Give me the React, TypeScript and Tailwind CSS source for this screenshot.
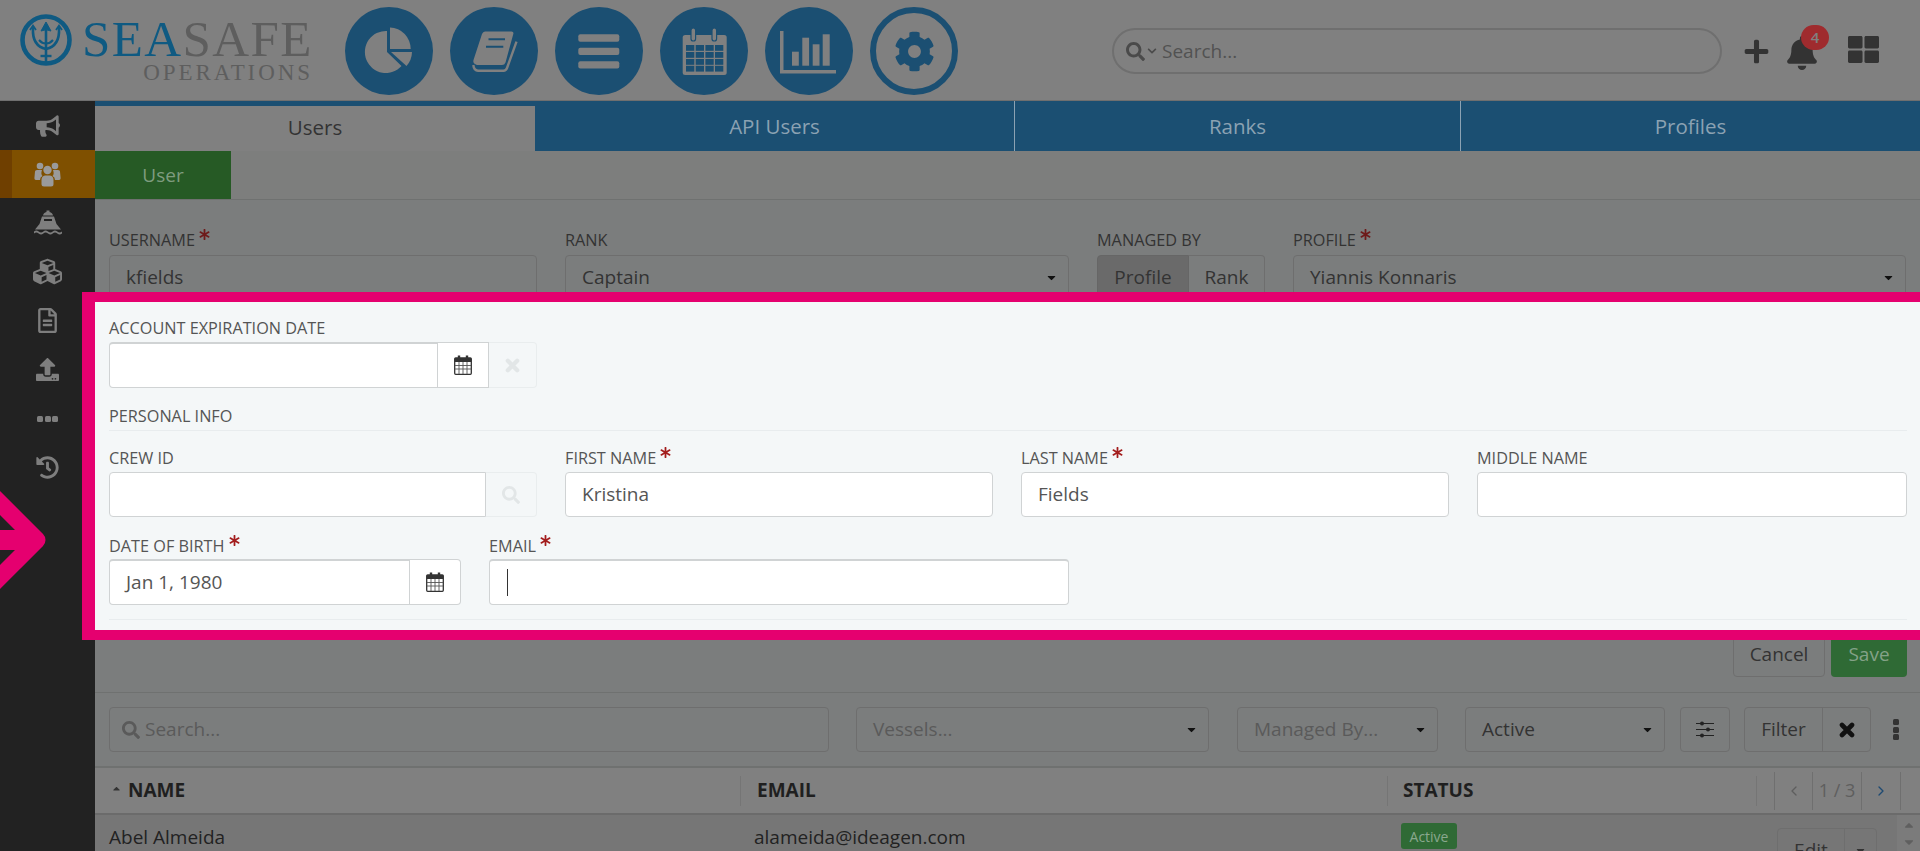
import type { ReactNode } from 'react'
import {
  FaAsterisk,
  FaBell,
  FaBullhorn,
  FaCaretDown,
  FaCaretUp,
  FaChevronDown,
  FaCog,
  FaCubes,
  FaHistory,
  FaPlus,
  FaRegFileAlt,
  FaSearch,
  FaThLarge,
  FaUpload
} from 'react-icons/fa'
import { LuChevronLeft, LuChevronRight } from 'react-icons/lu'

const DIM_BG = '#808080'
const BLUE = '#1b4f72'

function PieIcon() {
  return (
    <svg width="88" height="88" viewBox="0 0 88 88" fill={DIM_BG}>
      <path d="M42 45V24A21 21 0 1 0 56.5 59Z" />
      <path d="M45 42V20.5A21.5 21.5 0 0 1 65.7 42Z" />
      <path d="M46 45H67A22 22 0 0 1 61.5 59Z" />
    </svg>
  )
}

function BookIcon() {
  return (
    <svg width="88" height="88" viewBox="0 0 88 88" fill="none">
      <path d="M35 24.5H61.5Q64 24.5 63.3 27L55.5 55.5Q54.5 58 52 58H27Q22.5 57 23.5 53L32 27Q33 24.5 35 24.5Z" fill={DIM_BG} />
      <path d="M38.5 32.3H55M36 39.7H53.3" stroke={BLUE} strokeWidth="2" />
      <path d="M23.3 58Q24 63.7 28 63.7H53.5Q56 63.7 57 61L66.5 34.7" stroke={DIM_BG} strokeWidth="2.4" />
    </svg>
  )
}

function BarsIcon() {
  return (
    <svg width="88" height="88" viewBox="0 0 88 88" fill={DIM_BG}>
      <rect x="23.3" y="27.3" width="41" height="7.4" rx="2" />
      <rect x="23.3" y="40.7" width="41" height="7.4" rx="2" />
      <rect x="23.3" y="54.2" width="41" height="7.2" rx="2" />
    </svg>
  )
}

function CalendarIcon() {
  const rows = [38, 45, 52, 58.8]
  const cols = [26, 35.7, 45.4, 55]
  return (
    <svg width="88" height="88" viewBox="0 0 88 88" fill={DIM_BG}>
      <rect x="22.7" y="28" width="44" height="40" rx="2.5" />
      <rect x="31" y="21" width="4.6" height="13" rx="2.3" stroke={BLUE} strokeWidth="1.2" />
      <rect x="52" y="21" width="4.6" height="13" rx="2.3" stroke={BLUE} strokeWidth="1.2" />
      {rows.map((y) =>
        cols.map((x) => <rect key={`${x}-${y}`} x={x} y={y} width="8.3" height="5.8" fill={BLUE} />)
      )}
    </svg>
  )
}

function ChartIcon() {
  return (
    <svg width="88" height="88" viewBox="0 0 88 88" fill={DIM_BG}>
      <path d="M15 24H18.5V63H71V66.5H15Z" />
      <rect x="27" y="44.7" width="6.8" height="14" />
      <rect x="37.3" y="30.7" width="6.8" height="28" />
      <rect x="47.7" y="37.3" width="6.8" height="21.4" />
      <rect x="57.7" y="27.3" width="7" height="31.4" />
    </svg>
  )
}

// small FA4 style calendar, grid cells stay open
function CalIcon() {
  return (
    <svg width="18" height="20" viewBox="0 0 18 20" fill="none">
      <rect x="0.7" y="3" width="16.6" height="16.3" rx="1" stroke="#333" strokeWidth="1.3" />
      <rect x="0.7" y="3" width="16.6" height="4" fill="#333" />
      <path d="M5 0.5V5M13 0.5V5" stroke="#333" strokeWidth="2.4" />
      <path d="M1 10.5H17M1 14H17M5 7V19M9 7V19M13 7V19" stroke="#555" strokeWidth="0.9" />
    </svg>
  )
}

function XIcon({ size = 15 }: { size?: number }) {
  return (
    <svg width={size} height={size} viewBox="0 0 16 16" fill="none" stroke="currentColor" strokeWidth="4.6" strokeLinecap="round">
      <path d="M3 3L13 13M13 3L3 13" />
    </svg>
  )
}

function SlidersIcon() {
  return (
    <svg width="18" height="17" viewBox="0 0 18 17" fill="currentColor" stroke="currentColor">
      <path d="M0 2.5H18M0 8.5H18M0 14.5H18" strokeWidth="1.2" />
      <circle cx="6" cy="2.5" r="2" stroke="none" />
      <circle cx="12" cy="8.5" r="2" stroke="none" />
      <circle cx="6" cy="14.5" r="2" stroke="none" />
    </svg>
  )
}

function UsersIcon() {
  return (
    <svg width="27" height="25" viewBox="0 0 27 25" fill="currentColor">
      <circle cx="6" cy="4" r="3.3" />
      <circle cx="21" cy="4" r="3.3" />
      <circle cx="13.5" cy="8" r="4.2" />
      <path d="M1 9.5Q1 8 3 8H8Q6.5 12 8.5 14Q6 15 6 18H2Q0 18 0.5 15Z" />
      <path d="M26 9.5Q26 8 24 8H19Q20.5 12 18.5 14Q21 15 21 18H25Q27 18 26.5 15Z" />
      <path d="M7.5 18Q7.5 14 11 13.5H16Q19.5 14 19.5 18V22Q19.5 24.5 17 24.5H10Q7.5 24.5 7.5 22Z" />
    </svg>
  )
}

function ShipIcon() {
  return (
    <svg width="28" height="26" viewBox="0 0 28 26" fill="currentColor">
      <path d="M9 5.5Q9.5 2.5 12.5 2V0.5H15.5V2Q18.5 2.5 19 5.5Z" />
      <path d="M8 6.5H20L22.5 14L27 19.5H1L5.5 14ZM10 9V11H18V9Z" fillRule="evenodd" />
      <path d="M0 21.5Q2.3 19.5 4.7 21.5T9.3 21.5T14 21.5T18.7 21.5T23.3 21.5T28 21.5V23.500Q25.7 25.500 23.3 23.500T18.7 23.500T14 23.500T9.3 23.500T4.7 23.500T0 23.500Z" />
    </svg>
  )
}

function Dots({ vertical }: { vertical?: boolean }) {
  return (
    <div className={`flex gap-[1.5px] ${vertical ? 'flex-col' : ''}`}>
      <span className="size-[6px] rounded-[1.5px] bg-current" />
      <span className="size-[6px] rounded-[1.5px] bg-current" />
      <span className="size-[6px] rounded-[1.5px] bg-current" />
    </div>
  )
}

function Logo() {
  return (
    <div className="flex w-[345px] shrink-0 items-start pl-[20px] pt-[13px]">
      <svg width="52" height="54" viewBox="0 0 52 54" fill="none" stroke="#0f5a82" className="shrink-0">
        <circle cx="26" cy="27" r="23.5" strokeWidth="4.6" />
        <path d="M26 12V50" strokeWidth="2.6" />
        <path d="M21 18L26 9L31 18Q26 15.5 21 18Z" fill="#0f5a82" strokeWidth="1" />
        <path d="M13 15Q12 33 26 36Q40 33 39 15" strokeWidth="2.6" />
        <path d="M10 17L13 12.5L16 17M36 17L39 12.5L42 17" strokeWidth="1.8" />
        <path d="M19 27Q22 30.5 26 30.5Q30 30.5 33 27" strokeWidth="2" />
        <path d="M20.5 43H31.5" strokeWidth="2.4" />
      </svg>
      <div className="ml-[10px] flex flex-col items-end font-['Liberation_Serif',serif]">
        <div className="mt-[4px] whitespace-nowrap text-[51px] leading-[44px] tracking-[1.4px]">
          <span className="text-[#0f5a82]">SEA</span>
          <span className="text-[#5e5e5e]">SAFE</span>
        </div>
        <div className="mt-[1px] whitespace-nowrap text-[23px] leading-[22px] tracking-[2.9px] text-[#5e5e5e]">
          OPERATIONS
        </div>
      </div>
    </div>
  )
}

function Header() {
  const circles = [<PieIcon />, <BookIcon />, <BarsIcon />, <CalendarIcon />, <ChartIcon />]
  return (
    <header className="flex h-[101px] shrink-0 items-start border-b border-[#6f6f6f] bg-[#808080]">
      <Logo />
      <nav className="flex gap-[17px] pt-[7px]">
        {circles.map((icon, i) => (
          <div key={i} className="size-[88px] rounded-full bg-[#1b4f72]">
            {icon}
          </div>
        ))}
        <div className="flex size-[88px] items-center justify-center rounded-full border-[6px] border-[#1b4f72]">
          <FaCog size={41} color="#1b4f72" />
        </div>
      </nav>
      <div className="ml-[154px] mt-[28px] flex h-[46px] w-[610px] items-center rounded-full border-2 border-[#6f6f6f] pl-[12px] text-[#525252]">
        <FaSearch size={19} className="text-[#4a4a4a]" />
        <FaChevronDown size={10} className="ml-[2px] text-[#4a4a4a]" />
        <span className="ml-[5px] text-[19px]">Search...</span>
      </div>
      <div className="relative ml-[21px] mt-[38px] flex items-start">
        <FaPlus size={27} className="text-[#333]" />
        <FaBell size={34} className="ml-[15px] -mt-[2px] text-[#333]" />
        <span className="absolute left-[58px] -top-[13px] flex h-[25px] w-[28px] items-center justify-center rounded-full bg-[#9f2b2e] text-[15px] font-semibold text-[#808080]">
          4
        </span>
        <FaThLarge size={31} className="ml-[29px] -mt-[4px] text-[#333]" />
      </div>
    </header>
  )
}

function Sidebar() {
  const items = [
    { key: 'news', icon: <FaBullhorn size={24} /> },
    { key: 'users', icon: <UsersIcon />, active: true },
    { key: 'ship', icon: <ShipIcon /> },
    { key: 'cubes', icon: <FaCubes size={29} /> },
    { key: 'docs', icon: <FaRegFileAlt size={25} /> },
    { key: 'upload', icon: <FaUpload size={23} /> },
    { key: 'more', icon: <Dots /> },
    { key: 'history', icon: <FaHistory size={23} /> }
  ]
  return (
    <aside className="flex w-[95px] shrink-0 flex-col bg-[#222222] text-[#7e7e7e]">
      {items.map((item) =>
        item.active ? (
          <div key={item.key} className="flex h-[48px] items-center justify-center border-l-[12px] border-[#6f3f00] bg-[#7f5000] pr-[12px] text-[#9a9a9a]">
            {item.icon}
          </div>
        ) : (
          <div key={item.key} className="flex h-[49px] items-center justify-center">
            {item.icon}
          </div>
        )
      )}
    </aside>
  )
}

function Label({ text, required, bright }: { text: string; required?: boolean; bright?: boolean }) {
  return (
    <div className={`flex h-[20px] items-center whitespace-nowrap text-[16.25px] uppercase ${bright ? 'text-[#555]' : 'text-[#333]'}`}>
      {text}
      {required && (
        <FaAsterisk size={11} color={bright ? '#a31d1d' : '#6e1a1a'} className="ml-[4px] mb-[12px] inline-block" />
      )}
    </div>
  )
}

function Input({ value, className = '' }: { value?: string; className?: string }) {
  return (
    <div className={`flex h-[45px] items-center rounded-[4px] border border-[#d0d3d4] bg-white pl-[16px] text-[19px] text-[#555] ${className}`}>
      {value}
    </div>
  )
}

function DimInput({ value }: { value: string }) {
  return (
    <div className="mt-[5px] flex h-[45px] items-center rounded-[4px] border border-[#6e6e6e] pl-[16px] text-[19px] text-[#333]">
      {value}
    </div>
  )
}

function DimSelect({ value, muted, className = '' }: { value: string; muted?: boolean; className?: string }) {
  return (
    <div className={`flex h-[45px] items-center justify-between whitespace-nowrap rounded-[4px] border border-[#6e6e6e] pl-[16px] pr-[10px] text-[19px] ${muted ? 'text-[#5a5a5a]' : 'text-[#333]'} ${className}`}>
      {value}
      <FaCaretDown size={13} className="text-[#111]" />
    </div>
  )
}

function DateField({ value, clear, className = '' }: { value?: string; clear?: boolean; className?: string }) {
  return (
    <div className={`flex h-[46px] ${className}`}>
      <Input value={value} className="h-full flex-1 rounded-r-none border-t-2" />
      <div className={`flex h-full w-[51px] items-center justify-center border border-l-0 border-[#d0d3d4] bg-white ${clear ? '' : 'rounded-r-[4px]'}`}>
        <CalIcon />
      </div>
      {clear && (
        <div className="flex h-full w-[48px] items-center justify-center rounded-r-[4px] border border-l-0 border-[#e9edee] text-[#e2e6e7]">
          <XIcon />
        </div>
      )}
    </div>
  )
}

function TopForm() {
  return (
    <div className="flex h-[92px] gap-[28px] overflow-hidden px-[14px] pt-[30px]">
      <div className="w-[428px]">
        <Label text="Username" required />
        <DimInput value="kfields" />
      </div>
      <div className="w-[504px]">
        <Label text="Rank" />
        <DimSelect value="Captain" className="mt-[5px]" />
      </div>
      <div className="w-[168px]">
        <Label text="Managed by" />
        <div className="mt-[5px] flex h-[45px] text-[19px] text-[#333]">
          <div className="flex w-[92px] items-center justify-center rounded-l-[4px] border border-[#666] bg-[#6a6a6a]">Profile</div>
          <div className="flex flex-1 items-center justify-center rounded-r-[4px] border border-l-0 border-[#6e6e6e]">Rank</div>
        </div>
      </div>
      <div className="w-[613px]">
        <Label text="Profile" required />
        <DimSelect value="Yiannis Konnaris" className="mt-[5px]" />
      </div>
    </div>
  )
}

function HighlightPanel() {
  return (
    <section className="z-10 -ml-[13px] h-[348px] shrink-0 border-y-[10px] border-l-[13px] border-[#e5006f] bg-[#f4f7f8] pl-[14px] pr-[13px]">
      <div className="pt-[16px]">
        <Label text="Account expiration date" bright />
        <DateField clear className="mt-[4px] w-[428px]" />
      </div>
      <div className="mt-[18px] border-b border-[#e8ecee] pb-[4px]">
        <Label text="Personal info" bright />
      </div>
      <div className="mt-[17px] grid grid-cols-[428px_428px_428px_1fr] gap-x-[28px]">
        <div>
          <Label text="Crew ID" bright />
          <div className="mt-[4px] flex h-[45px]">
            <Input className="h-full flex-1 rounded-r-none" />
            <div className="flex w-[51px] items-center justify-center rounded-r-[4px] border border-l-0 border-[#e9edee] text-[#e2e6e7]">
              <FaSearch size={18} />
            </div>
          </div>
        </div>
        <div>
          <Label text="First name" required bright />
          <Input value="Kristina" className="mt-[4px]" />
        </div>
        <div>
          <Label text="Last name" required bright />
          <Input value="Fields" className="mt-[4px]" />
        </div>
        <div>
          <Label text="Middle name" bright />
          <Input className="mt-[4px]" />
        </div>
      </div>
      <div className="mt-[19px] flex gap-[28px]">
        <div className="w-[352px]">
          <Label text="Date of birth" required bright />
          <DateField value="Jan 1, 1980" className="mt-[3px]" />
        </div>
        <div className="w-[580px]">
          <Label text="Email" required bright />
          <div className="mt-[3px] flex h-[46px] items-center rounded-[4px] border border-t-2 border-[#d0d3d4] bg-white pl-[17px]">
            <div className="h-[27px] w-px bg-[#333]" />
          </div>
        </div>
      </div>
      <div className="mt-[14px] border-b border-[#e8ecee]" />
    </section>
  )
}

function Actions() {
  return (
    <div className="flex h-[53px] shrink-0 items-end justify-end gap-[6px] overflow-hidden border-b border-[#6f7170] pb-[15px] pr-[13px] text-[19px]">
      <div className="flex h-[45px] w-[92px] shrink-0 items-center justify-center rounded-[4px] border border-[#6e6e6e] text-[#333]">
        Cancel
      </div>
      <div className="flex h-[45px] w-[76px] shrink-0 items-center justify-center rounded-[4px] bg-[#2f6a35] text-[#84a288]">
        Save
      </div>
    </div>
  )
}

function Filters() {
  return (
    <div className="flex h-[75px] shrink-0 items-start border-b-2 border-[#6f7170] pl-[14px] pt-[14px] text-[19px]">
      <div className="flex h-[45px] w-[720px] items-center rounded-[4px] border border-[#6e6e6e] pl-[12px] text-[#5a5a5a]">
        <FaSearch size={18} className="mr-[5px]" />
        Search...
      </div>
      <DimSelect value="Vessels..." muted className="ml-[27px] w-[353px]" />
      <DimSelect value="Managed By..." muted className="ml-[28px] w-[201px]" />
      <DimSelect value="Active" className="ml-[27px] w-[200px]" />
      <div className="ml-[15px] flex h-[45px] w-[50px] items-center justify-center rounded-[4px] border border-[#6e6e6e] text-[#222]">
        <SlidersIcon />
      </div>
      <div className="ml-[14px] flex h-[45px] w-[127px] rounded-[4px] border border-[#6e6e6e] text-[#333]">
        <div className="flex flex-1 items-center justify-center">Filter</div>
        <div className="flex w-[48px] items-center justify-center border-l border-[#6e6e6e] text-[#111]">
          <XIcon size={16} />
        </div>
      </div>
      <div className="ml-[22px] mt-[12px] text-[#333]">
        <Dots vertical />
      </div>
    </div>
  )
}

function HeadCell({ className, children }: { className: string; children: ReactNode }) {
  return <div className={`flex h-[30px] items-center border-l border-[#757575] ${className}`}>{children}</div>
}

function Table() {
  return (
    <div className="flex min-h-0 flex-1 flex-col">
      <div className="flex h-[47px] shrink-0 items-center border-b-2 border-[#6b6b6b] bg-[#808080] text-[19px] font-bold text-[#1f1f1f]">
        <div className="flex w-[645px] items-center pl-[16px]">
          <FaCaretUp size={11} className="mb-[4px] mr-[6px] text-[#333]" />
          NAME
        </div>
        <HeadCell className="w-[647px] pl-[16px]">EMAIL</HeadCell>
        <HeadCell className="w-[369px] pl-[15px]">STATUS</HeadCell>
        <div className="flex h-[30px] items-center border-l border-[#757575] pl-[17px] font-normal text-[#5e5e5e]">
          <div className="flex h-[38px] items-center">
            <div className="flex h-full w-[38px] items-center justify-center border-l border-[#6f6f6f]">
              <LuChevronLeft size={16} />
            </div>
            <div className="flex h-full w-[50px] items-center justify-center border-x border-[#6f6f6f] text-[18px]">1 / 3</div>
            <div className="flex h-full w-[39px] items-center justify-center border-r border-[#6f6f6f] text-[#1e4a72]">
              <LuChevronRight size={16} />
            </div>
          </div>
        </div>
      </div>
      <div className="flex flex-1 overflow-hidden bg-[#767676] text-[19px] text-[#222]">
        <div className="w-[659px] shrink-0 pl-[14px] pt-[8px]">Abel Almeida</div>
        <div className="w-[647px] shrink-0 pt-[8px]">alameida@ideagen.com</div>
        <div className="w-[376px] shrink-0 pt-[9px]">
          <span className="-mt-[1px] flex h-[26px] w-[56px] items-center justify-center rounded-[3px] bg-[#2f6a35] text-[14px] text-[#8aa88e]">
            Active
          </span>
        </div>
        <div className="mt-[13px] flex h-[45px] w-[100px] shrink-0 rounded-[4px] border border-[#6e6e6e] text-[#333]">
          <div className="flex w-[66px] items-center justify-center">Edit</div>
          <div className="flex flex-1 items-center justify-center border-l border-[#6e6e6e]">
            <FaCaretDown size={13} />
          </div>
        </div>
        <div className="ml-[20px] flex flex-1 flex-col items-center bg-[#7b7b7b] pt-[3px] text-[#5f5f5f]">
          <FaCaretUp size={14} />
          <FaCaretDown size={14} className="mt-[3px]" />
        </div>
      </div>
    </div>
  )
}

export default function App() {
  return (
    <div className="relative flex h-[851px] w-[1920px] flex-col overflow-hidden bg-[#7b7d7d] font-['Open_Sans',sans-serif]">
      <Header />
      <div className="flex min-h-0 flex-1">
        <Sidebar />
        <main className="flex min-w-0 flex-1 flex-col">
          <div className="flex h-[50px] shrink-0 text-[20.5px]">
            <div className="flex w-[440px] items-center justify-center border-t-[5px] border-[#1b4f72] bg-[#808080] pb-[2px] text-[#333]">
              Users
            </div>
            <div className="flex w-[479px] items-center justify-center bg-[#1b4f72] text-[#8ba2b3]">API Users</div>
            <div className="flex w-[446px] items-center justify-center border-l border-[#8ba2b3] bg-[#1b4f72] text-[#8ba2b3]">Ranks</div>
            <div className="flex flex-1 items-center justify-center border-l border-[#8ba2b3] bg-[#1b4f72] text-[#8ba2b3]">Profiles</div>
          </div>
          <div className="flex h-[49px] shrink-0 border-b border-[#6f7170] bg-[#7d7e7d]">
            <div className="flex h-[48px] w-[136px] items-center justify-center bg-[#265a25] text-[19px] text-[#7f9c7f]">User</div>
          </div>
          <TopForm />
          <HighlightPanel />
          <Actions />
          <Filters />
          <Table />
        </main>
      </div>
      <svg width="60" height="130" viewBox="0 0 60 130" fill="none" stroke="#e5006f" className="absolute left-0 top-[475px]">
        <path d="M-20 8L37 65L-20 122" strokeWidth="17" strokeLinejoin="round" />
        <path d="M0 65H37" strokeWidth="20" />
      </svg>
    </div>
  )
}
